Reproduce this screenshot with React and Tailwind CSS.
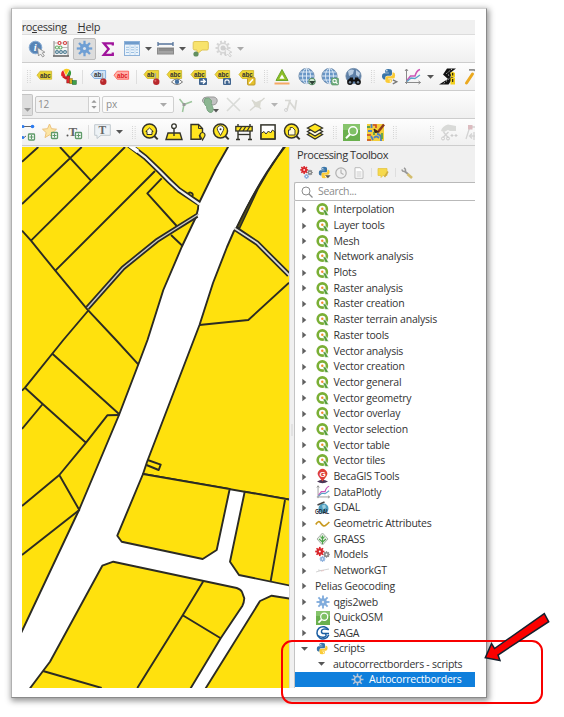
import React from "react";

const Svg = ({ w = 18, h = 18, vb, children, className = "" }) => (
  <svg width={w} height={h} viewBox={vb || `0 0 ${w} ${h}`} className={`block shrink-0 overflow-visible ${className}`} fill="none">
    {children}
  </svg>
);

const teeth = (n, cx, cy, r0, r1, c, sw) =>
  Array.from({ length: n }, (_, i) => {
    const a = (i * 2 * Math.PI) / n;
    return (
      <line key={i} x1={cx + r0 * Math.cos(a)} y1={cy + r0 * Math.sin(a)} x2={cx + r1 * Math.cos(a)} y2={cy + r1 * Math.sin(a)} stroke={c} strokeWidth={sw} />
    );
  });

const GearG = ({ cx = 9, cy = 9, r = 4, R = 8, c = "#6c9bd2", sw = 2, hole = 1.6, n = 8, hc = "#e4e8ee" }) => (
  <g>
    {teeth(n, cx, cy, r - 0.5, R, c, sw)}
    <circle cx={cx} cy={cy} r={r + 0.6} fill={c} />
    <circle cx={cx} cy={cy} r={hole} fill={hc} />
  </g>
);

const Caret = ({ c = "#555" }) => (
  <Svg w={7} h={4}><path d="M0 0h7L3.5 3.8z" fill={c} /></Svg>
);
const Grip = () => (
  <Svg w={4} h={13}>
    <path d="M.5 0v13M3.2 0v13" stroke="#d6d6d6" strokeWidth="1" strokeDasharray="1 1" />
  </Svg>
);
const Sep = ({ h = 14 }) => <Svg w={1} h={h}><path d={`M.5 0v${h}`} stroke="#dedede" /></Svg>;

const Info = () => (
  <Svg>
    <circle cx="7.5" cy="7.5" r="6.3" fill="#5784b6" stroke="#86aad2" />
    <text x="5.7" y="11.2" fontSize="10.5" fontStyle="italic" fontWeight="700" fontFamily="Liberation Serif, serif" fill="#fff">i</text>
    <path d="M9.5 7.500l1 8.500 2-2 2.200 3 1.600-1.100-2-3 2.600-.7z" fill="#eee" stroke="#888" strokeWidth=".8" />
  </Svg>
);
const Abacus = () => (
  <Svg>
    <path d="M2 1v15M16 1v15" stroke="#888" strokeWidth="1" />
    <path d="M2 3h14M2 7.500h14M2 12h14" stroke="#aaa" strokeWidth=".8" />
    <path d="M1 16h16" stroke="#666" strokeWidth="1.600" />
    <g strokeWidth="1.100" fill="#fff">
      <g stroke="#d43a3a"><circle cx="7.500" cy="3" r="1.500" /><circle cx="13" cy="3" r="1.500" /></g>
      <g stroke="#6aae6a"><circle cx="5" cy="7.500" r="1.500" /><circle cx="8.500" cy="7.500" r="1.500" /></g>
      <g stroke="#47788f"><circle cx="5" cy="12" r="1.400" /><circle cx="9" cy="12" r="1.400" /><circle cx="13" cy="12" r="1.400" /></g>
    </g>
  </Svg>
);
const GearButton = () => (
  <div className="flex h-[22px] w-[23px] shrink-0 items-center justify-center rounded-[2px] border border-[#bcbcbc] bg-[#dcdcdc]">
    <Svg w={17} h={17} vb="0 0 18 18"><GearG hc="#dbe3ee" c="#6f9fd4" R={8.2} r={4.4} sw={2.4} /></Svg>
  </div>
);
const Sigma = () => (
  <Svg w={14} h={16}><path d="M11.800 4.500V2.300H2.800l4.800 5.700-4.800 5.800h9V11.500" stroke="#a0149c" strokeWidth="2.300" /></Svg>
);
const Table = () => (
  <Svg w={16} h={15}>
    <rect x=".5" y=".5" width="15" height="14" fill="#eaf3fb" stroke="#8db1d8" />
    <rect x="1" y="1" width="14" height="2.600" fill="#6f9ccc" />
    <path d="M2 6.300h3M7 6.300h3M12 6.300h2M2 8.800h3M7 8.800h3M12 8.800h2M2 11.500h3M7 11.500h3M12 11.500h2" stroke="#9cc0e2" />
    <path d="M6 4v10M11 4v10" stroke="#c3d9ed" />
  </Svg>
);
const Measure = () => (
  <Svg w={17} h={13}>
    <path d="M.5 2h16M1 0v4M16 0v4" stroke="#55739a" strokeWidth="1.300" />
    <rect x=".5" y="6" width="16" height="6" fill="#a3a3a3" stroke="#8a8a8a" />
    <path d="M3 6v3M5 6v3M7 6v3M9 6v3M11 6v3M13 6v3M15 6v3" stroke="#666" strokeWidth=".7" />
  </Svg>
);
const Tip = () => (
  <Svg w={17} h={17}>
    <path d="M3 1.500h12q1.300 0 1.300 1.200v6q0 1.300-1.300 1.300H10l-5 4V10H3Q1.200 10 1.200 8.700v-6Q1.200 1.500 3 1.500z" fill="#f8e36c" stroke="#dfc556" />
    <circle cx="4" cy="14" r="2.600" fill="#638f60" />
  </Svg>
);
const GreyGear = () => (
  <Svg>
    <GearG cx={8} cy={8} c="#d6d6d6" R={7.500} r={5} sw={2} hole={4} hc="#f4f4f4" n={10} />
    <circle cx="8" cy="8" r="2.500" fill="#d0d0d0" />
    <path d="M10 8l.6 8 2-2 2.400 3 1.400-1-2.200-3 2.600-.8z" fill="#f2f2f2" stroke="#cacaca" strokeWidth=".8" />
  </Svg>
);

const Tag = ({ x = 1, y = 2, fill = "#ecd534", stroke = "#cfb838", tc = "#333", t = "abc", w = 15 }) => (
  <g>
    <path d={`M${x} ${y + 4}l3.200-4h${w - 3.600}v8H${x + 3.200}z`} fill={fill} stroke={stroke} strokeWidth=".9" />
    <text x={x + 3} y={y + 6.300} fontSize="6.300" fontWeight="700" fontFamily="Liberation Sans, Arial, sans-serif" fill={tc}>{t}</text>
  </g>
);
const TagIcon = ({ kind }) => {
  const y = kind === "plain" || kind === "red" ? 3.200 : 2.500;
  return (
    <Svg>
      <Tag y={y}
        fill={kind === "red" ? "#ffb1ab" : kind === "blue" ? "#cfe3f7" : "#ecd534"}
        stroke={kind === "red" ? "#ff5f55" : kind === "blue" ? "#7fabdc" : "#cfb838"}
        tc={kind === "red" ? "#e01b1b" : "#333"}
        t={kind === "blue" || kind === "pin" ? "ab" : "abc"} />
      {(kind === "blue" || kind === "pin") && (
        <g><path d="M12.500 5v6" stroke="#aaa" strokeWidth="1.300" /><circle cx="13.300" cy="13.700" r="3.200" fill="#b8282c" /><circle cx="12.400" cy="12.700" r="1" fill="#dd6a6a" /></g>
      )}
      {kind === "eye" && (
        <g><path d="M5.500 14q5-6 11 0-5.500 5-11 0z" fill="#fff" stroke="#666" strokeWidth=".9" /><circle cx="11" cy="13.800" r="2.200" fill="#44709f" /></g>
      )}
      {kind === "move" && (
        <g><rect x="9" y="10" width="8" height="7" rx="1" fill="#41658f" /><path d="M10.500 13.500h4.500M13 11.200l2.300 2.300-2.300 2.300" stroke="#fff" strokeWidth="1.300" /></g>
      )}
      {kind === "rot" && (
        <g><rect x="9" y="10" width="8" height="7" rx="1" fill="#41658f" /><path d="M11.200 15.800q-1-4 1.800-4t2 3.500" stroke="#fff" strokeWidth="1.200" /></g>
      )}
      {kind === "edit" && (
        <g><rect x="9.500" y="9.500" width="7.500" height="7.500" rx="1" fill="#e5c02a" stroke="#bd9a2a" /><path d="M11.200 15.500l3.800-4.200" stroke="#fff" strokeWidth="1.600" /></g>
      )}
    </Svg>
  );
};
const Pie = () => (
  <Svg>
    <path d="M6 7.500L3.500 2Q6-.2 9.500 1.500z" fill="#f6cb1f" />
    <path d="M5.500 8L3.200 2.300Q.5 4 1.300 8L5 10z" fill="#e8252c" />
    <path d="M6.500 8L9.700 1.700Q12 4 10.500 7.500L7.500 10z" fill="#37973b" />
    <path d="M2 9l4-.8 1.500 2.300-2 1z" fill="#c81e26" />
    <rect x="6.800" y="8" width="3" height="7" fill="#e0252d" stroke="#7d1a12" strokeWidth=".5" />
    <rect x="9.800" y="10.500" width="2.500" height="5.300" fill="#d8ad1a" stroke="#735b10" strokeWidth=".4" />
    <rect x="12.300" y="12.500" width="4" height="4" fill="#3f9f49" stroke="#1d5a2a" strokeWidth=".5" />
  </Svg>
);
const Delta = () => (
  <Svg w={16} h={17}>
    <path d="M8 1.500l6 11h-12z" fill="#8fbf26" stroke="#6aa52c" />
    <path d="M8 6.500l2.600 4.300H5.400z" fill="#fff" />
    <path d="M.5 15.500h15" stroke="#f6a964" strokeWidth="2" />
  </Svg>
);
const Globe = ({ kind }) => (
  <Svg>
    <circle cx="8.500" cy="8" r="7.600" fill={kind === "bino" ? "#5d7fa6" : "#6795c6"} stroke="#6684a6" strokeWidth=".8" />
    {kind === "bino" ? (
      <g>
        <path d="M3 3q3-2.500 6-1l-1 4-4 2zM11 2l4 3-1 4-3-2z" fill="#b9cde2" />
        <circle cx="5" cy="14" r="2.900" fill="#111" /><circle cx="13" cy="14" r="2.900" fill="#111" />
        <path d="M5 9.500h3v2h2v-2h3l2 4H3z" fill="#111" />
        <circle cx="5" cy="14.200" r="1.200" fill="#789" /><circle cx="13" cy="14.200" r="1.200" fill="#789" />
      </g>
    ) : (
      <g>
        <path d="M8.500.5v15M1 8h15M2.300 4h12.500M2.300 12h12.500" stroke="#dbe8f5" />
        <ellipse cx="8.500" cy="8" rx="4" ry="7.500" stroke="#dbe8f5" />
        {kind === "add" ? (
          <g><circle cx="14" cy="13.500" r="3.300" fill="#cfe6d2" stroke="#4f8a60" /><path d="M11 13h6.500l-3.200 3.800z" fill="#2f4437" /></g>
        ) : (
          <g><rect x="10.500" y="10" width="7" height="7" rx="1" fill="#6fae7c" stroke="#4f8a60" strokeWidth=".6" /><g stroke="#fff" strokeWidth="1.100"><circle cx="13.600" cy="13" r="1.700" /><path d="M14.800 14.200l1.700 1.700" /></g></g>
        )}
      </g>
    )}
  </Svg>
);
const PyPaths = () => (
  <g>
    <path d="M8 1C5 1 4.500 2 4.500 3.500V5h4v.7H3Q1 6 1 9t2 3.300h1.700V10q0-1.800 2-1.800h3.500q1.600 0 1.600-1.700v-3Q11.800 1 8 1z" fill="#3a75a8" />
    <path d="M8.200 16c3 0 3.500-1 3.500-2.500V12h-4v-.7h5.500q2-.3 2-3.300T13.500 4.900h-1.200V7q0 1.900-2 1.900H6.500Q4.700 9 4.700 10.600v3Q4.700 16 8.200 16z" fill="#fbcb35" />
    <circle cx="6.300" cy="3" r=".8" fill="#fff" /><circle cx="10" cy="14" r=".8" fill="#fff" />
  </g>
);
const Python = ({ s = 17, more }) => (
  <Svg w={s} h={s} vb="0 0 17 17"><g transform={more ? "scale(.93)" : undefined}><PyPaths /></g>{more && <path d="M11.800 11.800l4 2-4 2" stroke="#777" strokeWidth="1.300" />}</Svg>
);
const Plot = ({ s = 17 }) => (
  <Svg w={s} h={s} vb="0 0 17 17">
    <path d="M2.500 16V1M1 14.500h15.500M1 3l1.500-2L4 3M14.500 13l2 1.500-2 1.500" stroke="#8a8a8a" strokeWidth="1" />
    <path d="M3 12.500L6.500 8h4.500q1.500-5.500 5-6.500" stroke="#cc55b5" strokeWidth="1.500" />
    <path d="M3 13.500l4-3.500 4 .5 5-3.500" stroke="#5aa3c8" strokeWidth="1.300" />
  </Svg>
);
const Road = () => (
  <Svg w={17} h={17}>
    <path d="M8 .5h9l-6 4.500 4 3.500L9.500 16.500H0L9 11 4 6.500z" fill="#111" />
    <path d="M13 1L7.500 5.500l4.500 3.500-8 7" stroke="#f4f4f4" strokeWidth=".8" strokeDasharray="1.500 1.500" />
    <path d="M11.500 5l2-1.500L16 5v4h-4z" fill="#f2cf1c" />
    <rect x="11.500" y="9.500" width="4.500" height="7" fill="#f2cf1c" />
    <path d="M13.700 5v2.500M13.700 11v3" stroke="#111" strokeWidth="1.100" />
  </Svg>
);
const Hammer = () => (
  <Svg w={11} h={17}>
    <path d="M1.500 15L7.500 6" stroke="#eba91f" strokeWidth="3" strokeLinecap="round" />
    <path d="M4 1.800h4.500q2 0 3 2.500" stroke="#8f8f8f" strokeWidth="1.800" />
  </Svg>
);

const YBranch = () => (
  <Svg w={15} h={16}>
    <path d="M1.500 2L6 7.500l8-3M6 7.500L4.500 15" stroke="#9cc59c" strokeWidth="1.500" />
    <rect x="4.500" y="6" width="3" height="3" fill="#999" />
  </Svg>
);
const Blob = () => (
  <Svg>
    <path d="M6 1h7q4 1 3 5-1 3-4 3l-5-2Q1 8 1.500 4 2 1 6 1z" fill="#c2c2c2" stroke="#999" />
    <path d="M4 2.500q4-2 6.500 2-1 3 1 6 2 5-1.500 6-4 0-4.500-6Q2 8 4 2.500z" fill="#8cb692" stroke="#7aa581" />
    <path d="M12 13h6L15 16.500z" fill="#555" />
  </Svg>
);
const XIcon = () => <Svg w={15} h={15}><path d="M1 1l13 13M14 1L1 14" stroke="#d9dbd8" strokeWidth="1.600" /></Svg>;
const XPoly = () => (
  <Svg w={17} h={15}><path d="M1 13.500L15.500 1M3 3l9 9" stroke="#d6d6d0" strokeWidth="1.300" /><path d="M3 3l4 2 5-2-1 8-5-1z" fill="#d9d9d0" /></Svg>
);
const NPoly = () => (
  <Svg w={16} h={14}><path d="M2 2.500h5l-3 9.500M6 3l6 8 1.500-9" stroke="#d8d8d4" strokeWidth="1.700" /><circle cx="3" cy="12" r="1.500" stroke="#d2d2d2" /></Svg>
);

const Plus = ({ x, y }) => (
  <g><rect x={x} y={y} width="6" height="6" rx=".8" fill="#fff" stroke="#5f9a69" strokeWidth="1.300" /><path d={`M${x + 3} ${y + 1}v4M${x + 1} ${y + 3}h4`} stroke="#5f9a69" strokeWidth="1.200" /></g>
);
const Nodes = () => (
  <Svg w={13} h={17}>
    <path d="M0 2.500h10M0 13q2 1.500 4-1" stroke="#666" />
    <circle cx="1" cy="2.500" r="1.500" fill="#2b7bf0" /><circle cx="10.500" cy="2.500" r="1.800" fill="#2b7bf0" /><circle cx=".8" cy="13.500" r="1.500" fill="#2b7bf0" />
    <Plus x={6.5} y={10} />
  </Svg>
);
const Star = () => (
  <Svg><path d="M7.500 1l2 4.700 5 .5-3.800 3.400 1.200 5-4.400-2.700L3 14.600l1.200-5L.5 6.200l5-.5z" fill="#fce5a4" stroke="#ecc27c" /><Plus x={9.500} y={9.500} /></Svg>
);
const DotT = () => (
  <Svg w={17} h={16}>
    <text x="2.500" y="12" fontSize="13" fontFamily="Liberation Serif, serif" fontWeight="700" fill="#666">T</text>
    <circle cx="1.500" cy="11.500" r="1" fill="#555" /><Plus x={9.500} y={8.500} />
  </Svg>
);
const TBubble = () => (
  <Svg w={17} h={16}>
    <path d="M.7.7h15.600v10.600H7L3 14.500v-3.200H.7z" fill="#edf2f6" stroke="#c0c8ce" />
    <text x="4.500" y="10" fontSize="11.500" fontFamily="Liberation Serif, serif" fontWeight="700" fill="#666">T</text>
  </Svg>
);
const K = "#33332a", Y = "#ffe51f";
const Mag = ({ children }) => (
  <Svg><circle cx="8.500" cy="8" r="7" fill={Y} stroke={K} strokeWidth="1.500" /><path d="M13.300 13l3.400 3.400" stroke={K} strokeWidth="1.900" />{children}</Svg>
);
const MagHome = () => (
  <Mag><path d="M4.800 8.500l3.700-3.500 3.700 3.500H11v3H6v-3z" stroke={K} fill="#fffbe0" strokeWidth="1" strokeLinejoin="round" /></Mag>
);
const Marker = () => (
  <Svg><path d="M3 10h12l2 6.500H1z" fill={Y} stroke={K} strokeWidth="1.400" /><path d="M9 5v8" stroke={K} strokeWidth="1.400" /><circle cx="9" cy="3.200" r="2.300" fill="#fff" stroke={K} strokeWidth="1.300" /></Svg>
);
const PageI = () => (
  <Svg w={17}><path d="M2 1.500h7.500l4 4v5l-3 2 1 3.700H2z" fill={Y} stroke={K} strokeWidth="1.400" /><path d="M9.500 1.500v4h4" stroke={K} /><path d="M13.500 17l-2.200-3.800a2.500 2.500 0 1 1 4.400 0z" fill={Y} stroke={K} strokeWidth="1.200" /></Svg>
);
const MagPin = () => (
  <Mag><path d="M8.500 12.500L5.600 7.200a3.200 3.200 0 1 1 5.800 0z" fill="#fff" stroke={K} strokeWidth=".9" /><circle cx="8.500" cy="6.300" r="1" fill={K} /></Mag>
);
const Barrier = () => (
  <Svg><path d="M3 1v16M15 1v16M1 16.500h4M13 16.500h4" stroke={K} strokeWidth="1.400" /><rect x=".8" y="3.500" width="16.400" height="4.500" fill={Y} stroke={K} strokeWidth="1.300" /><path d="M4 8l2.500-4M8 8l2.500-4M12 8l2.500-4" stroke={K} strokeWidth="1.300" /><path d="M3 11.500h12" stroke={K} strokeWidth="1.300" /></Svg>
);
const ChartI = () => (
  <Svg w={16} h={16}><rect x=".9" y=".9" width="14.200" height="14.200" fill="#fff" /><path d="M1 9.500l3-2 2 2.500 2.500-3 2 2 2-3 2.500 2V15H1z" fill={Y} stroke={K} /><rect x=".9" y=".9" width="14.200" height="14.200" stroke={K} strokeWidth="1.500" /></Svg>
);
const MagHand = () => (
  <Mag><path d="M5.500 12V7h1.700V4.500h2.300L12 7v5z" fill="#fffbd8" stroke={K} strokeWidth=".9" /></Mag>
);
const Layers = () => (
  <Svg><path d="M9 7.500l7.500 4L9 16l-7.500-4.500z" fill={Y} stroke={K} strokeWidth="1.300" /><path d="M9 4.500l7.500 4L9 13 1.500 8.500z" fill="#fffbe0" stroke={K} strokeWidth="1.300" /><path d="M9 1l7.500 4L9 9.500 1.500 5z" fill={Y} stroke={K} strokeWidth="1.300" /></Svg>
);
const GreenMag = ({ s = 17 }) => (
  <Svg w={s} h={s} vb="0 0 17 17"><rect width="17" height="17" fill="#69b04d" /><rect width="17" height="6" fill="#86c46c" /><circle cx="10" cy="7" r="4.300" fill="#7fc065" stroke="#fff" strokeWidth="1.500" /><path d="M7 10.200l-4 4" stroke="#fff" strokeWidth="2" /></Svg>
);
const MapBrush = () => (
  <Svg w={17} h={17}>
    <rect width="17" height="17" fill="#f4cf3a" />
    <path d="M4.500 0v4M1 7h4M7 14q2-3 5 0M10 10q3 0 4 3v4M4 12l2 4" stroke="#4c7fc4" strokeWidth="1.800" />
    <path d="M0 11h4M0 16h4M6 1h3v3" stroke="#c8462a" strokeWidth="1.600" />
    <path d="M0 3h3M15 9v6M7 8v3" stroke="#5da04e" strokeWidth="1.800" />
    <path d="M17 .5L11 8" stroke="#8b3a1e" strokeWidth="2.500" /><path d="M11.500 8L7 5l1 3.500z" fill="#3a2418" stroke="#3a2418" />
  </Svg>
);
const CutGrey = () => (
  <Svg w={17}><path d="M1 8q1-5 7-6.500l8 1.500v5h-6l-2-1-4 2z" fill="#d9dad8" /><path d="M3.500 9l5 6M8.500 9l-5 5" stroke="#d2d2d2" strokeWidth="1.300" /><circle cx="3" cy="15.500" r="1.500" stroke="#ccc" /><circle cx="8" cy="15.500" r="1.500" stroke="#ccc" /><path d="M10.500 12.500h3M12 11v3M14.500 12.500h3M16 11v3" stroke="#ccc" strokeWidth="1.100" /></Svg>
);
const NodeGrey = () => (
  <Svg w={11} h={17}><path d="M1 15L4.500 4M6 3h5M9 8v8M5 12h6M7 9.500L4.500 12 7 14.500" stroke="#d3d3d3" strokeWidth="1.300" /><rect x="3" y="1" width="4.500" height="4.500" fill="#dcbcc0" /></Svg>
);

// Lays icons out in a row, each centred on its own x measured from the row's left edge.
const Row = ({ items, className }) => {
  let right = 0;
  return (
    <div className={`flex shrink-0 items-center overflow-hidden ${className}`}>
      {items.map(([cx, w, node], i) => {
        const ml = cx - w / 2 - right;
        right = cx + w / 2;
        return (
          <div key={i} className="flex shrink-0 justify-center" style={{ marginLeft: ml, width: w }}>{node}</div>
        );
      })}
    </div>
  );
};

const bar = "border-b border-[#cdcdcd] bg-linear-to-b from-[#fdfdfd] to-[#f0f0f0]";

const row1 = [
  [14.500, 18, <Info />], [38.500, 18, <Abacus />], [62, 23, <GearButton />], [85.500, 14, <Sigma />],
  [109.500, 16, <Table />], [126, 7, <Caret />], [143.500, 17, <Measure />], [160.500, 7, <Caret />],
  [178, 17, <Tip />], [202, 18, <GreyGear />], [218.500, 7, <Caret c="#aaa" />],
];
const row2 = [
  [7, 4, <Grip />], [22.500, 18, <TagIcon kind="plain" />], [47, 18, <Pie />], [60.500, 1, <Sep />],
  [76.500, 18, <TagIcon kind="blue" />], [99.500, 18, <TagIcon kind="red" />], [114.500, 1, <Sep />],
  [129.500, 18, <TagIcon kind="pin" />], [153, 18, <TagIcon kind="eye" />], [177, 18, <TagIcon kind="move" />],
  [200.500, 18, <TagIcon kind="rot" />], [224.500, 18, <TagIcon kind="edit" />], [243.500, 4, <Grip />],
  [260, 16, <Delta />], [284.500, 18, <Globe kind="add" />], [308, 18, <Globe kind="find" />],
  [331.500, 18, <Globe kind="bino" />], [350.500, 4, <Grip />], [367.500, 17, <Python more />],
  [390.500, 17, <Plot />], [408, 7, <Caret />], [425.500, 17, <Road />], [448, 11, <Hammer />],
];
const row3b = [
  [11.500, 15, <YBranch />], [36, 18, <Blob />], [59.500, 15, <XIcon />], [83.500, 17, <XPoly />],
  [100, 7, <Caret c="#b4b4b4" />], [117, 16, <NPoly />],
];
const row4 = [
  [6.500, 13, <Nodes />], [28.500, 18, <Star />], [52, 17, <DotT />], [66.500, 1, <Sep />],
  [80.500, 17, <TBubble />], [97.500, 7, <Caret />], [111.500, 4, <Grip />], [127.500, 18, <MagHome />],
  [151.500, 18, <Marker />], [175.500, 17, <PageI />], [198.500, 18, <MagPin />], [222, 18, <Barrier />],
  [246, 16, <ChartI />], [269.500, 18, <MagHand />], [293, 18, <Layers />], [313, 4, <Grip />],
  [329.500, 17, <GreenMag />], [353, 17, <MapBrush />], [373, 4, <Grip />], [409.500, 4, <Grip />],
  [426.500, 17, <CutGrey />], [448, 11, <NodeGrey />],
];

const Q = () => (
  <Svg w={13} h={13}>
    <circle cx="6.300" cy="6" r="4.600" stroke="#7aaf35" strokeWidth="2.600" />
    <path d="M6.700 6.800h2.800l3.200 5.700h-3.400z" fill="#569e3c" stroke="#fff" strokeWidth=".6" />
    <circle cx="6.300" cy="5.800" r="1.200" fill="#f08a2c" />
  </Svg>
);
const Beca = () => (
  <Svg w={13} h={15}>
    <path d="M1 12.500q5.500-3.500 11 0-5.500 3.500-11 0z" fill="#4b3657" />
    <path d="M6.500 12.500L2.700 7.500a4.700 4.700 0 1 1 7.600 0z" fill="#dd4038" />
    <text x="3.500" y="7.800" fontSize="8" fontWeight="700" fontFamily="Liberation Sans, sans-serif" fill="#fff">G</text>
  </Svg>
);
const Gdal = () => (
  <Svg w={15} h={14}>
    <circle cx="8.500" cy="7.500" r="5" fill="#4f9fc0" /><path d="M7 4.500l3-1 1 3-3 2z" fill="#9fcfe0" /><path d="M2.500 4l7-3" stroke="#444" strokeWidth="1.600" />
    <text x="0" y="13" fontSize="6.500" fontWeight="700" textLength="14" lengthAdjust="spacingAndGlyphs" fontFamily="Liberation Sans, sans-serif" fill="#1c2733">GDAL</text>
  </Svg>
);
const Wave = () => <Svg w={15} h={8}><path d="M.8 4.500Q3.500-.5 6 3.500t5 1.500Q12.500 4 14.300 2" stroke="#c99b22" strokeWidth="1.700" /></Svg>;
const Grass = () => (
  <Svg w={13} h={14}><path d="M6.500 1l5.500 6-5.500 6L1 7z" fill="#e6ede4" stroke="#aab4aa" /><path d="M6.500 12V3.500M6.500 10L3 7M6.500 10L10 7M6.500 7L4.500 4.500M6.500 7L8.500 4.500" stroke="#4da349" strokeWidth="1.100" /></Svg>
);
const ModelsI = ({ s = 15 }) => (
  <Svg w={s} h={s} vb="0 0 15 15">
    <GearG cx={4.800} cy={4.500} r={2.600} R={4.600} c="#d9252b" sw={1.700} hole={1} hc="#fff" />
    <GearG cx={11.500} cy={7.500} r={2} R={3.300} c="#8c8c8c" sw={1.300} hole={.9} hc="#fff" />
    <GearG cx={7.500} cy={12} r={1.700} R={2.900} c="#8fb2dd" sw={1.200} hole={.7} hc="#fff" />
  </Svg>
);
const NetGT = () => <Svg w={15} h={8}><path d="M1 5l5-1.500 8-1.500M3 3l4 .8" stroke="#cfcfcf" strokeWidth=".9" /><path d="M6 4l3-.5" stroke="#e6bbbb" strokeWidth=".7" /></Svg>;
const Saga = () => (
  <Svg w={14} h={14}><path d="M12.500 4A6.100 6.100 0 1 0 12.800 8.800" stroke="#1c5fa3" strokeWidth="1.500" /><path d="M13 3.500Q6 2 5.500 5T9 7.500h4M9 7.500q2.500 2.500-.5 3.500T2 9.500" stroke="#1c5fa3" strokeWidth="1.500" /></Svg>
);

const items = [
  ...["Interpolation", "Layer tools", "Mesh", "Network analysis", "Plots", "Raster analysis", "Raster creation",
    "Raster terrain analysis", "Raster tools", "Vector analysis", "Vector creation", "Vector general",
    "Vector geometry", "Vector overlay", "Vector selection", "Vector table", "Vector tiles"].map((t) => [t, <Q />]),
  ["BecaGIS Tools", <Beca />], ["DataPlotly", <Plot s={14} />], ["GDAL", <Gdal />], ["Geometric Attributes", <Wave />],
  ["GRASS", <Grass />], ["Models", <ModelsI />], ["NetworkGT", <NetGT />], ["Pelias Geocoding", null],
  ["qgis2web", <Svg w={14} h={14}><GearG cx={7} cy={7} r={3.200} R={6.500} c="#7fabdc" sw={1.800} hole={1.200} /></Svg>],
  ["QuickOSM", <GreenMag s={14} />], ["SAGA", <Saga />],
];

const Right = () => <Svg w={5} h={8}><path d="M.3.800L4.300 4 .3 7.200z" fill="#606060" /></Svg>;

const ParcelMap = () => (
  <svg width="267" height="541" viewBox="22 147 267 541" className="block shrink-0 bg-white">
    <g fill="#ffe10d" stroke="#2b2b24" strokeWidth="1.900" strokeLinejoin="round">
      <path d="M20 140H232L228 147 216 168 199 203Q198 205 198 209L196 217 181.700 247 163.300 290 147.500 340 138.300 364.500 119 415 79 510 22 631 18 640V140z" />
      <path d="M284 147L267 172Q253 194 237 227L234 231 227 247 213 283 199.500 325 147 462 143 474 292 500V140H288z" />
      <path d="M143 474L229.700 489 216.700 550 202.700 559 121.700 541.700 117.300 535.700z" />
      <path d="M244.700 491.700L230 561.700 239 575 292 586V500z" />
      <path d="M28 691L43 671 50 661.700 102.300 565.700 113.300 561.700 236.700 588Q241 589.500 242 592L244.300 598.300Q244 603 242.300 606L220.700 638.300 189 691z" />
      <path d="M204 691L260 601 271.700 595.700 292 599V691z" />
    </g>
    <g stroke="#2b2b24" strokeWidth="1.900" fill="none" strokeLinejoin="round">
      <path d="M22 161.700L38.300 147M22 204L81.700 147M60 147L91 180.700M31 240.700L125 147M55.300 270.700L155 171" />
      <path d="M161.700 178.300L147.300 193.300 176.700 226M171 235L182.300 245.700" />
      <path d="M22 230.700L31 240.700 55.300 270.700 87.300 309.300 116 340 138.300 364.300" />
      <path d="M88.300 310.500L63.300 340 25 387.700 22 390.700M52.700 354L119.300 414.300" />
      <path d="M119.300 415L107.300 415.300 86 442.700 59.300 475 22 506M25 387.700L42.700 404 86 442.700M42.700 404L22 429M59.300 475L79.300 510 22 555" />
      <path d="M199.300 325L248.300 320 289 282.700M285 500L270.700 581" />
      <path d="M147.700 460L160.700 464.700 158.700 470 146.500 465M43 671L101.700 688M203.300 581.300L182.700 615.300 137.300 688M182.700 615.300L220.700 638.300" />
      <path d="M188 195.500a2.400 2.400 0 1 1 4.500 0.500" />
    </g>
    <path d="M284 147L267 173Q253 194 237 227l2.500 1.500L258 189l15-26 12-16z" fill="#5b5418" stroke="#2b2b24" strokeWidth="1.500" />
    <g fill="none">
      <path d="M129 145L145 157 160 171.500Q170 182 179 190L198.500 203" stroke="#2b2b24" strokeWidth="5.500" />
      <path d="M129 145L145 157 160 171.500Q170 182 179 190L200 204.500" stroke="#f1f1f1" strokeWidth="2.200" />
      <path d="M129 145L138 151.500" stroke="#fff" strokeWidth="4" />
      <path d="M197 215.500L172 231 157 240.500 123 268 87.500 308" stroke="#2b2b24" strokeWidth="4.900" />
      <path d="M199 214L172 231 157 240.500 123 268 87.500 308" stroke="#c9c9c9" strokeWidth="1.400" />
      <path d="M236 229L257 243 289 275" stroke="#2b2b24" strokeWidth="5.200" />
      <path d="M234 228L257 243 290 276" stroke="#dedede" strokeWidth="1.700" />
    </g>
  </svg>
);

export default function App() {
  return (
    <div className="relative h-[717px] w-[564px] overflow-hidden bg-white pl-[11px] pt-[8px] font-['Open_Sans','Noto_Sans',sans-serif] text-[10.5px] text-[#333]">
      <div className="h-[690px] w-[476px] border border-t-[#d0d0d0] border-l-[#b0b0b0] border-r-[#8a8a8a] border-b-[#8a8a8a] bg-white pl-[10px] pt-[11px] shadow-[1px_2px_6px_1px_rgba(0,0,0,0.42)]">
        <div className="flex h-[668px] w-[453px] flex-col overflow-hidden bg-white">
          <div className="flex h-[15px] shrink-0 items-center border-b border-[#dcdcdc] bg-[#f0f0f0] leading-[14px]">
            <span className="-ml-[6.500px] w-[62px] whitespace-nowrap text-[11px] tracking-[-0.400px]">Pro<u>c</u>essing</span>
            <span className="text-[11px] tracking-[-0.250px]"><u>H</u>elp</span>
          </div>
          <Row items={row1} className={`h-[28px] ${bar}`} />
          <Row items={row2} className={`h-[28px] ${bar}`} />
          <div className={`flex h-[28px] shrink-0 items-center ${bar}`}>
            <div className="flex h-[22px] w-[11px] items-end justify-center rounded-r-[2px] border border-l-0 border-[#c4c4c4] bg-[#dedede] pb-[3px]"><Caret c="#999" /></div>
            <div className="ml-[2px] flex h-[17px] w-[65px] items-center rounded-[2px] border border-[#c6c6c6] bg-[#f2f2f2]">
              <span className="flex-1 pl-[2px] text-[10px] tracking-[-0.300px] text-[#8d8d8d]">12</span>
              <span className="flex h-full w-[11px] flex-col items-center justify-center gap-[3px] border-l border-[#d0d0d0] bg-[#fafafa]">
                <Svg w={6} h={3} vb="0 0 7 4"><path d="M0 3.800h7L3.500 0z" fill="#999" /></Svg>
                <Svg w={6} h={3} vb="0 0 7 4"><path d="M0 0h7L3.500 3.800z" fill="#999" /></Svg>
              </span>
            </div>
            <div className="ml-[2px] flex h-[17px] w-[72px] items-center justify-between rounded-[2px] border border-[#d0d0d0] bg-[#fafafa] pl-[3px] pr-[6px] text-[10px] tracking-[-0.200px] text-[#8d8d8d]"><span>px</span><Caret c="#aaa" /></div>
            <Row items={row3b} className="h-full" />
          </div>
          <Row items={row4} className={`h-[27px] ${bar}`} />
          <div className="h-[1px] shrink-0 bg-[#f0f0f0]" />
          <div className="flex h-[541px] shrink-0">
            <ParcelMap />
            <div className="flex h-[541px] w-[186px] bg-[#f0f0f0]">
              <div className="flex w-[5px] shrink-0 items-center justify-center border-l border-[#d8d8d8]"><div className="mt-[24px] h-[12px] w-[2px] bg-[#e2e2e2]" /></div>
              <div className="flex min-w-0 flex-1 flex-col">
                <div className="flex h-[16px] shrink-0 items-center pl-[3px] text-[11px] tracking-[-0.450px] whitespace-nowrap">Processing Toolbox</div>
                <Row className="h-[19px]" items={[
                  [12, 13, <ModelsI s={13} />],
                  [30, 13, <Svg w={13} h={13} vb="0 0 17 17"><PyPaths /><path d="M9.500 12h7L13 16z" fill="#555" /></Svg>],
                  [47, 12, <Svg w={12} h={12}><circle cx="6" cy="6" r="5.200" stroke="#b0b0b0" strokeWidth="1.200" /><path d="M6 2.500V6l2.500 1.500" stroke="#b0b0b0" strokeWidth="1.100" /></Svg>],
                  [65, 10, <Svg w={10} h={12}><path d="M1 .7h5L9 3.500v7.800H1z" fill="#fff" stroke="#bbb" /><path d="M2.500 5h5M2.500 7h5M2.500 9h5" stroke="#bbb" strokeWidth=".8" /></Svg>],
                  [77, 1, <Sep h={9} />],
                  [89, 12, <Svg w={12} h={12}><path d="M1 1.500h9v7H6l-2 2v-2H1z" fill="#f6d94c" stroke="#e5c548" strokeWidth=".8" /><path d="M7.500 10l3.500-5.500" stroke="#cfae40" strokeWidth="1.500" /></Svg>],
                  [101, 1, <Sep h={9} />],
                  [112.500, 12, <Svg w={12} h={12}><path d="M4 4.500l3 2.500" stroke="#999" strokeWidth="2" /><path d="M6.500 7l4.500 4" stroke="#d3bd6e" strokeWidth="2.600" /><path d="M.8 2.500q.8 2.500 3.200 2Q5.500 2.500 3 .8" stroke="#999" strokeWidth="1.500" /></Svg>],
                ]} />
                <div className="flex h-[19px] shrink-0 items-center gap-[5px] rounded-l-[2px] border border-r-0 border-[#b9b9b9] bg-white pl-[6px] text-[#8b8b8b]">
                  <Svg w={12} h={12}><circle cx="5" cy="5" r="4" stroke="#8c8c8c" /><path d="M8 8l3.500 3.500" stroke="#8c8c8c" strokeWidth="1.200" /></Svg>
                  <span className="tracking-[-0.350px]">Search...</span>
                </div>
                <div className="flex flex-1 flex-col border-l border-[#c4c4c4] bg-white pt-[1px] tracking-[-0.220px] whitespace-nowrap">
                  {items.map(([t, ic]) => (
                    <div key={t} className="flex h-[15.700px] shrink-0 items-center pl-[7px] leading-[15px]">
                      <Right />
                      {ic ? <span className="ml-[7px] flex w-[17px] justify-center">{ic}</span> : null}
                      <span className={ic ? "ml-[2.500px]" : "ml-[8px]"}>{t}</span>
                    </div>
                  ))}
                  <div className="flex h-[15.300px] shrink-0 items-center pl-[5.500px] leading-[15px]">
                    <Caret /><span className="ml-[6.500px] flex w-[17px] justify-center"><Python s={13} /></span><span className="ml-[2.500px]">Scripts</span>
                  </div>
                  <div className="flex h-[15px] shrink-0 items-center pl-[23px] leading-[15px] tracking-[-0.260px]">
                    <Caret /><span className="ml-[8px]">autocorrectborders - scripts</span>
                  </div>
                  <div className="flex h-[15.400px] shrink-0 items-center bg-[#0f7fdc] pl-[56px] leading-[15px] text-white">
                    <Svg w={13} h={13}><g>{teeth(8, 6.5, 6.5, 3.5, 6, "#b9c6d6", 1.5)}<circle cx="6.500" cy="6.500" r="3" stroke="#b9c6d6" strokeWidth="1.500" /></g></Svg>
                    <span className="ml-[5px]">Autocorrectborders</span>
                  </div>
                </div>
              </div>
            </div>
          </div>
        </div>
      </div>
      <div className="absolute left-[281px] top-[640px] h-[64px] w-[262px] rounded-[11px] border-2 border-[#f80000]" />
      <svg className="absolute left-[480px] top-[608px]" width="76" height="60" viewBox="480 608 76 60">
        <path d="M544.300 613.700L548.700 621.700 498 655 500 660.500 485.300 657.700 491.500 643.700 494.500 648.500z" fill="#fb0000" stroke="#14202e" strokeWidth="1.500" />
      </svg>
    </div>
  );
}
